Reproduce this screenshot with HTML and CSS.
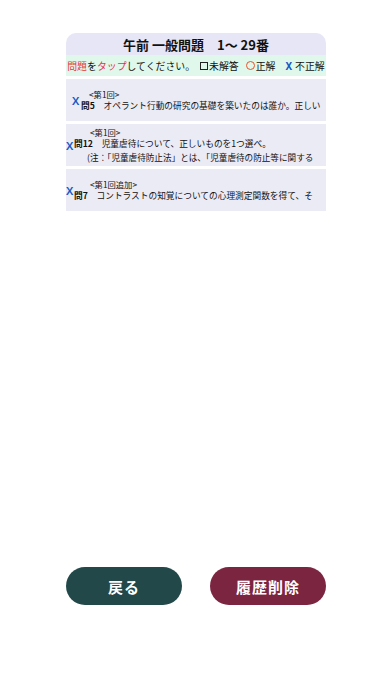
FILE: index.html
```html
<!DOCTYPE html>
<html lang="ja">
<head>
<meta charset="utf-8">
<link rel="stylesheet" href="styles.css">
</head>
<body>
<div class="page">
  <div class="panel">
    <div class="title">午前 一般問題　1〜 29番</div>
    <div class="legend"><span class="red">問題</span>を<span class="red">タップ</span>してください。<span class="sq"></span>未解答<span class="circ"></span>正解<span class="xm">X</span>不正解</div>
    <div class="list">
      <div class="item item-a">
        <span class="mark">X</span>
        <div class="text">
          <div class="round">&lt;第1回&gt;</div>
          <div class="q"><b>問5</b>　オペラント行動の研究の基礎を築いたのは誰か。正しい</div>
        </div>
      </div>
      <div class="item item-b">
        <span class="mark">X</span>
        <div class="text">
          <div class="round">&lt;第1回&gt;</div>
          <div class="q"><b>問12</b>　児童虐待について、正しいものを1つ選べ。</div>
          <div class="q note">(注：「児童虐待防止法」とは、「児童虐待の防止等に関する</div>
        </div>
      </div>
      <div class="item item-c">
        <span class="mark">X</span>
        <div class="text">
          <div class="round">&lt;第1回追加&gt;</div>
          <div class="q"><b>問7</b>　コントラストの知覚についての心理測定関数を得て、そ</div>
        </div>
      </div>
    </div>
  </div>
  <div class="buttons">
    <div class="btn back">戻る</div>
    <div class="btn del">履歴削除</div>
  </div>
</div>
</body>
</html>
```
FILE: styles.css
```css
* { box-sizing: border-box; }
html, body { margin: 0; padding: 0; background: #ffffff; }
body {
  font-family: "Noto Sans CJK JP", "Noto Sans", sans-serif;
  color: #111;
}
.page {
  height: 696px;
  display: flex;
  flex-direction: column;
  align-items: center;
}
.panel {
  width: 260px;
  margin-top: 33px;
  flex: 1;
}
.title {
  height: 22px;
  background: #e6e6f6;
  border-radius: 10px 10px 0 0;
  font-size: 13px;
  font-weight: 700;
  text-align: center;
  line-height: 23px;
  white-space: pre;
}
.legend {
  height: 21px;
  background: #e0f8ec;
  font-size: 9.9px;
  display: flex;
  align-items: center;
  justify-content: center;
  white-space: nowrap;
  overflow: hidden;
}
.red { color: #e8323a; }
.sq {
  width: 8px;
  height: 8px;
  border: 1px solid #222;
  margin: 0 1px 0 5px;
  flex: none;
}
.circ {
  width: 9px;
  height: 9px;
  border: 1.4px solid #e8502c;
  border-radius: 50%;
  margin: 0 1px 0 7px;
  flex: none;
}
.xm {
  color: #1759c4;
  font-weight: 700;
  font-family: "Noto Sans", sans-serif;
  margin: 0 3px 0 10px;
}
.list {
  margin-top: 3px;
  display: flex;
  flex-direction: column;
  gap: 3px;
}
.item {
  height: 42px;
  background: #ebebf6;
  display: flex;
  align-items: center;
  padding-right: 3px;
  overflow: hidden;
}
.item-a { padding-left: 6px; }
.item-b { padding-left: 0; }
.item-c { padding-left: 0; }
.mark {
  color: #1759c4;
  font-family: "Noto Sans", sans-serif;
  font-weight: 600;
  font-size: 11.5px;
  width: 8px;
  flex: none;
  margin-top: 1px;
}
.item-a .mark { margin-right: 1px; }
.text {
  flex: 1;
  min-width: 0;
  overflow: hidden;
  white-space: nowrap;
}
.round {
  font-size: 8.3px;
  line-height: 12px;
  padding-left: 8px;
}
.item-b .round { padding-left: 16px; }
.item-c .round { padding-left: 16px; }
.q {
  font-size: 8.7px;
  line-height: 12px;
}
.q b { font-weight: 700; }
.note {
  font-size: 8.6px;
  line-height: 14px;
  padding-left: 13px;
}
.buttons {
  width: 260px;
  display: flex;
  justify-content: space-between;
  padding-bottom: 91px;
}
.btn {
  width: 116px;
  height: 38px;
  border-radius: 19px;
  color: #ffffff;
  font-size: 15px;
  font-weight: 700;
  display: flex;
  align-items: center;
  justify-content: center;
  letter-spacing: 1px;
}
.back { background: #22484a; }
.del { background: #7c2540; }
```
